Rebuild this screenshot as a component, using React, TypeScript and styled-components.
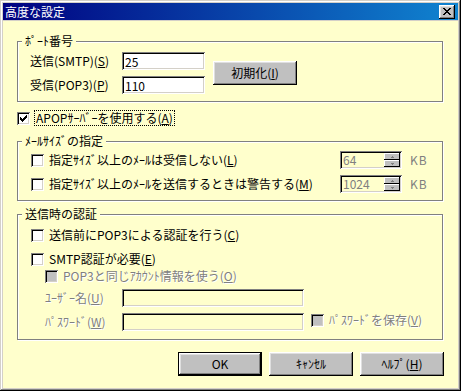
import React from "react";
import styled, { createGlobalStyle } from "styled-components";

const BODY = "#FFFFCC";
const FACE = "#C0C0C0";

const Global = createGlobalStyle`
  html, body { margin: 0; padding: 0; background: #D4D0C8; }
  body {
    font-family: "Noto Sans CJK JP", "Noto Sans", sans-serif;
    font-size: 12px;
    line-height: 14px;
    color: #000;
  }
  * { box-sizing: border-box; }
`;

const Window = styled.div`
  width: 461px;
  height: 391px;
  padding: 3px;
  background: #D4D0C8;
  box-shadow: inset -1px -1px #000, inset 1px 1px #D4D0C8,
    inset -2px -2px #808080, inset 2px 2px #fff;
  display: flex;
  flex-direction: column;
`;

const TitleBar = styled.div`
  height: 17px;
  margin-bottom: 1px;
  background: linear-gradient(to right, #000080, #1084d0);
  display: flex;
  align-items: flex-start;
  color: #fff;
`;

const TitleText = styled.div`
  flex: 1;
  padding-left: 2px;
  line-height: 17px;
  font-size: 12px;
`;

const CloseButton = styled.div`
  width: 16px;
  height: 14px;
  margin: 2px 3px 0 0;
  background: ${FACE};
  box-shadow: inset -1px -1px #000, inset 1px 1px #fff,
    inset -2px -2px #808080, inset 2px 2px #dfdfdf;
  display: flex;
  align-items: center;
  justify-content: center;
  padding-bottom: 1px;
`;

const Client = styled.div`
  flex: 1;
  background: ${BODY};
  display: flex;
  flex-direction: column;
  padding-top: 13px;
`;

const Group = styled.fieldset<{ $mt: number; $pt: number; $pb: number }>`
  margin: ${(p) => p.$mt}px 15px 0 14px;
  padding: ${(p) => p.$pt}px 0 ${(p) => p.$pb}px 0;
  border: 1px solid #808080;
  box-shadow: inset 1px 1px #fff, 1px 1px #fff;
  min-width: 0;
`;

const Legend = styled.legend`
  margin-left: 4px;
  padding: 0 3px;
  height: 14px;
  line-height: 14px;
  background: ${BODY};
`;

const Key = styled.span`
  text-decoration: underline;
  text-underline-offset: 1px;
`;

const PortBody = styled.div`
  display: flex;
  align-items: center;
  padding-left: 12px;
`;

const PortFields = styled.div`
  display: flex;
  flex-direction: column;
  gap: 6px;
`;

const FieldRow = styled.div<{ $indent?: number; $mt?: number }>`
  display: flex;
  align-items: center;
  height: 18px;
  padding-left: ${(p) => p.$indent ?? 0}px;
  margin-top: ${(p) => p.$mt ?? 0}px;
`;

const FieldLabel = styled.div<{ $w: number; $disabled?: boolean }>`
  width: ${(p) => p.$w}px;
  white-space: nowrap;
  color: ${(p) => (p.$disabled ? "#808080" : "#000")};
  text-shadow: ${(p) => (p.$disabled ? "1px 1px 0 #fff" : "none")};
`;

const sunken = `
  box-shadow: inset 1px 1px #808080, inset -1px -1px #fff,
    inset 2px 2px #000, inset -2px -2px #D4D0C8;
`;

const TextInput = styled.input<{ $w: number; $disabled?: boolean }>`
  width: ${(p) => p.$w}px;
  height: 18px;
  border: none;
  margin: 0;
  padding: 2px 2px 2px 3px;
  font: inherit;
  line-height: 14px;
  outline: none;
  background: ${(p) => (p.$disabled ? BODY : "#fff")};
  color: ${(p) => (p.$disabled ? "#808080" : "#000")};
  -webkit-text-fill-color: ${(p) => (p.$disabled ? "#808080" : "#000")};
  opacity: 1;
  ${sunken}
`;

const Button = styled.div<{ $default?: boolean; $ml?: number }>`
  width: 84px;
  height: 24px;
  margin-left: ${(p) => p.$ml ?? 0}px;
  background: ${FACE};
  display: flex;
  align-items: center;
  justify-content: center;
  white-space: nowrap;
  padding-bottom: 1px;
  border: ${(p) => (p.$default ? "1px solid #000" : "none")};
  box-shadow: inset -1px -1px #000, inset 1px 1px #fff,
    inset -2px -2px #808080, inset 2px 2px #dfdfdf;
`;

const CheckRow = styled.div<{ $indent: number; $mt: number; $h?: number }>`
  display: flex;
  align-items: flex-start;
  height: ${(p) => p.$h ?? 17}px;
  margin-top: ${(p) => p.$mt}px;
  padding-left: ${(p) => p.$indent}px;
`;

const Box = styled.div<{ $disabled?: boolean }>`
  width: 13px;
  height: 13px;
  flex: none;
  margin-top: 2px;
  background: ${(p) => (p.$disabled ? FACE : "#fff")};
  ${sunken}
  display: flex;
  padding: 3px 0 0 3px;
`;

const CheckText = styled.div<{ $disabled?: boolean; $focus?: boolean; $ml?: number }>`
  margin-left: ${(p) => p.$ml ?? 5}px;
  white-space: nowrap;
  line-height: 14px;
  padding: ${(p) => (p.$focus ? "0 1px" : "1px 0")};
  border: ${(p) => (p.$focus ? "1px dotted #000" : "none")};
  color: ${(p) => (p.$disabled ? "#808080" : "#000")};
  text-shadow: ${(p) => (p.$disabled ? "1px 1px 0 #fff" : "none")};
`;

const SizeRows = styled.div`
  display: flex;
  flex-direction: column;
  gap: 6px;
`;

const SizeRow = styled.div`
  display: flex;
  align-items: center;
  height: 18px;
  padding-left: 13px;
`;

const SizeCheck = styled.div`
  flex: 1;
  display: flex;
  align-items: center;
`;

const CenterBox = styled(Box)`
  margin-top: 0;
`;

const SizeText = styled.div`
  margin-left: 5px;
  white-space: nowrap;
`;

const Spin = styled.div`
  width: 62px;
  height: 18px;
  background: ${BODY};
  ${sunken}
  display: flex;
  padding: 2px;
`;

const SpinValue = styled.div`
  flex: 1;
  padding-left: 1px;
  color: #808080;
  line-height: 14px;
`;

const SpinButtons = styled.div`
  width: 16px;
  display: flex;
  flex-direction: column;
`;

const SpinButton = styled.div`
  height: 7px;
  background: ${FACE};
  box-shadow: inset -1px -1px #000, inset 1px 1px #fff;
  display: flex;
  align-items: center;
  justify-content: center;
`;

const Unit = styled.div`
  width: 40px;
  padding-left: 8px;
  color: #808080;
  letter-spacing: 1px;
`;

const ButtonRow = styled.div`
  display: flex;
  justify-content: flex-end;
  gap: 7px;
  margin-top: 12px;
  padding-right: 14px;
`;

const CheckMark = () => (
  <svg width="7" height="7" viewBox="0 0 7 7" shapeRendering="crispEdges">
    {[2, 3, 4, 3, 2, 1, 0].map((y, x) => (
      <rect key={x} x={x} y={y} width="1" height="3" fill="#000" />
    ))}
  </svg>
);

const CloseGlyph = () => (
  <svg width="8" height="7" viewBox="0 0 8 7" shapeRendering="crispEdges">
    <path
      d="M0 0h2v1h1v1h2v-1h1v-1h2v1h-1v1h-1v1h-1v1h1v1h1v1h1v1h-2v-1h-1v-1h-2v1h-1v1h-2v-1h1v-1h1v-1h1v-1h-1v-1h-1v-1h-1z"
      fill="#000"
    />
  </svg>
);

const SpinArrow = ({ up }: { up: boolean }) => (
  <svg width="3" height="2" viewBox="0 0 3 2" shapeRendering="crispEdges">
    {up ? (
      <path d="M1 0h1v1h1v1h-3v-1h1z" fill="#808080" />
    ) : (
      <path d="M0 0h3v1h-1v1h-1v-1h-1z" fill="#808080" />
    )}
  </svg>
);

const Check = ({ checked, disabled }: { checked?: boolean; disabled?: boolean }) => (
  <Box $disabled={disabled}>{checked && <CheckMark />}</Box>
);

const SizeSetting = ({ label, value }: { label: React.ReactNode; value: string }) => (
  <SizeRow>
    <SizeCheck>
      <CenterBox />
      <SizeText>{label}</SizeText>
    </SizeCheck>
    <Spin>
      <SpinValue>{value}</SpinValue>
      <SpinButtons>
        <SpinButton>
          <SpinArrow up />
        </SpinButton>
        <SpinButton>
          <SpinArrow up={false} />
        </SpinButton>
      </SpinButtons>
    </Spin>
    <Unit>KB</Unit>
  </SizeRow>
);

export default function App() {
  return (
    <>
      <Global />
      <Window>
        <TitleBar>
          <TitleText>高度な設定</TitleText>
          <CloseButton>
            <CloseGlyph />
          </CloseButton>
        </TitleBar>
        <Client>
          <Group $mt={0} $pt={4} $pb={7}>
            <Legend>ﾎﾟｰﾄ番号</Legend>
            <PortBody>
              <PortFields>
                <FieldRow>
                  <FieldLabel $w={92}>
                    送信(SMTP)(<Key>S</Key>)
                  </FieldLabel>
                  <TextInput $w={83} defaultValue="25" />
                </FieldRow>
                <FieldRow>
                  <FieldLabel $w={92}>
                    受信(POP3)(<Key>P</Key>)
                  </FieldLabel>
                  <TextInput $w={83} defaultValue="110" />
                </FieldRow>
              </PortFields>
              <Button $ml={8}>
                初期化(<Key>I</Key>)
              </Button>
            </PortBody>
          </Group>

          <CheckRow $indent={14} $mt={8} $h={16}>
            <Check checked />
            <CheckText $focus $ml={4}>
              APOPｻｰﾊﾞｰを使用する(<Key>A</Key>)
            </CheckText>
          </CheckRow>

          <Group $mt={8} $pt={3} $pb={7}>
            <Legend>ﾒｰﾙｻｲｽﾞの指定</Legend>
            <SizeRows>
              <SizeSetting
                value="64"
                label={
                  <>
                    指定ｻｲｽﾞ以上のﾒｰﾙは受信しない(<Key>L</Key>)
                  </>
                }
              />
              <SizeSetting
                value="1024"
                label={
                  <>
                    指定ｻｲｽﾞ以上のﾒｰﾙを送信するときは警告する(<Key>M</Key>)
                  </>
                }
              />
            </SizeRows>
          </Group>

          <Group $mt={6} $pt={6} $pb={8}>
            <Legend>送信時の認証</Legend>
            <CheckRow $indent={13} $mt={0}>
              <Check />
              <CheckText>
                送信前にPOP3による認証を行う(<Key>C</Key>)
              </CheckText>
            </CheckRow>
            <CheckRow $indent={13} $mt={7}>
              <Check />
              <CheckText>
                SMTP認証が必要(<Key>E</Key>)
              </CheckText>
            </CheckRow>
            <CheckRow $indent={27} $mt={0}>
              <Check disabled />
              <CheckText $disabled>
                POP3と同じｱｶｳﾝﾄ情報を使う(<Key>O</Key>)
              </CheckText>
            </CheckRow>
            <FieldRow $indent={27} $mt={4}>
              <FieldLabel $w={77} $disabled>
                ﾕｰｻﾞｰ名(<Key>U</Key>)
              </FieldLabel>
              <TextInput $w={182} $disabled disabled />
            </FieldRow>
            <FieldRow $indent={27} $mt={6}>
              <FieldLabel $w={77} $disabled>
                ﾊﾟｽﾜｰﾄﾞ(<Key>W</Key>)
              </FieldLabel>
              <TextInput $w={182} $disabled disabled />
              <CheckRow $indent={7} $mt={-2} $h={18}>
                <Check disabled />
                <CheckText $disabled>
                  ﾊﾟｽﾜｰﾄﾞを保存(<Key>V</Key>)
                </CheckText>
              </CheckRow>
            </FieldRow>
          </Group>

          <ButtonRow>
            <Button $default>OK</Button>
            <Button>ｷｬﾝｾﾙ</Button>
            <Button>
              ﾍﾙﾌﾟ(<Key>H</Key>)
            </Button>
          </ButtonRow>
        </Client>
      </Window>
    </>
  );
}
